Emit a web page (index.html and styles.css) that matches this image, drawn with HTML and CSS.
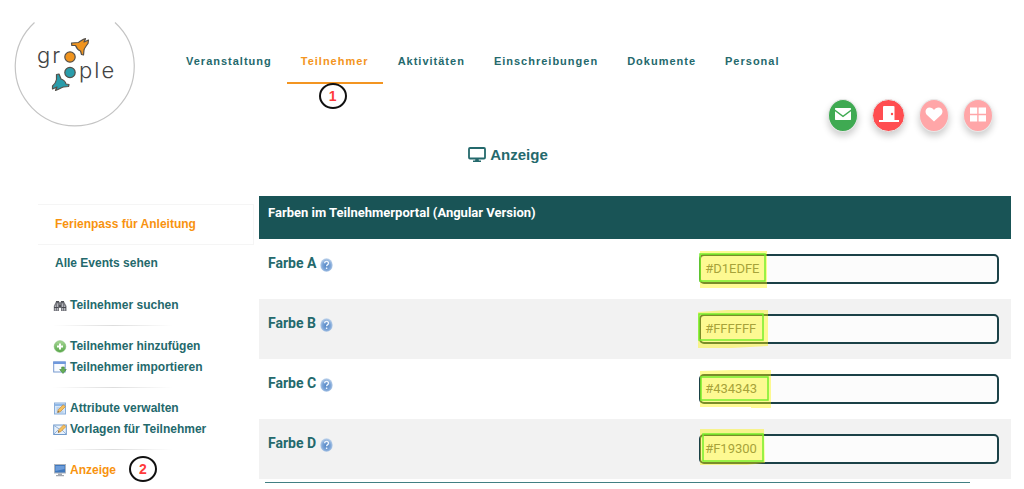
FILE: index.html
```html
<!DOCTYPE html>
<html lang="de">
<head>
<meta charset="utf-8">
<title>Anzeige</title>
<link rel="stylesheet" href="styles.css">
</head>
<body>
<svg class="defs" width="0" height="0" aria-hidden="true">
  <defs>
    <radialGradient id="helpFill" cx="50%" cy="55%" r="55%"><stop offset="0" stop-color="#4f83c4"/><stop offset=".6" stop-color="#7ea6d8"/><stop offset="1" stop-color="#c3d6ec"/></radialGradient>
    <linearGradient id="addFill" x2="0" y2="1"><stop offset="0" stop-color="#a8d796"/><stop offset="1" stop-color="#57a649"/></linearGradient>
    <symbol id="help" viewBox="0 0 13 14"><ellipse cx="6.5" cy="7" rx="6.2" ry="6.7" fill="url(#helpFill)"/><path d="M4.7 5.2c0-2.5 3.8-2.4 3.8 0 0 1.500-1.900 1.400-1.900 3.100M6.600 9.600v1.300" fill="none" stroke="#edf4fc" stroke-width="1.400"/></symbol>
    <symbol id="pencil" viewBox="0 0 9 9"><path d="M.6 8.400 1.300 5.700 6.300.7 8.300 2.700 3.300 7.700Z" fill="#f5c05e" stroke="#c98d39" stroke-width=".7"/><path d="M.6 8.400 1 7 2 8Z" fill="#444"/></symbol>
  </defs>
</svg>
<header class="top">
  <a class="logo" href="#" aria-label="groople">
    <svg width="122" height="105" viewBox="0 0 122 105">
      <path d="M20.500.5A59.500 59.500 0 1 0 101 .5" fill="none" stroke="#c4c4c4" stroke-width="1.200"/>
      <g class="logo-text"><text x="23" y="41">gr</text><text x="65" y="56">ple</text></g>
      <g stroke="#55504a" stroke-width="1.200" stroke-linejoin="round">
        <circle cx="56" cy="35" r="5.200" fill="#f0941f"/>
        <circle cx="56" cy="50.500" r="5.200" fill="#2a9caa"/>
        <path d="M57.500 21 64.500 20.500C67 19 69 17 71.500 16.700L70 20 74.500 18 74 21.500C72 24 70.500 26 70 28L69.500 33 67.500 32.500 66.500 29C64 28 62.500 26 61.500 23.500L57.800 23.500Z" fill="#f0941f"/>
        <path d="M42.500 52.500 45 52 47 57C50 58 51.500 59.500 52 62L55 62.500 54.500 64.500 49.500 65C47 65.500 44.500 68 41.500 68.500L43 65 38.500 67 38.500 64C41 62 42 60 42.500 57.500Z" fill="#2a9caa"/>
      </g>
    </svg>
  </a>
  <nav class="nav">
    <a href="#">Veranstaltung</a>
    <a class="active" href="#">Teilnehmer<span class="step step-one">1</span></a>
    <a href="#">Aktivitäten</a>
    <a href="#">Einschreibungen</a>
    <a href="#">Dokumente</a>
    <a href="#">Personal</a>
  </nav>
  <div class="actions">
    <button class="round green" aria-label="Nachrichten"><svg width="18" height="14" viewBox="0 0 18 14"><path d="M1.500 1h15l.5.5v1L9 8.500 1 2.500v-1ZM1 4.300 9 10.200l8-5.900v8.200l-.5.500h-15l-.5-.5Z" fill="#fff"/></svg></button>
    <button class="round red" aria-label="Abmelden"><svg width="20" height="18" viewBox="0 0 20 18"><path d="M4 1.500 5 1h9.500l1 .5V15H20v2H0v-2h4Z" fill="#fff"/><circle cx="13" cy="9" r="1.200" fill="#ff4d50"/></svg></button>
    <button class="round pink" aria-label="Favoriten"><svg width="18" height="15" viewBox="0 0 18 15"><path d="M9 14.500 2 8C-1 4.500 1 .5 4.500.5 6.500.5 8 1.500 9 3 10 1.500 11.500.5 13.500.5 17 .5 19 4.500 16 8Z" fill="#fff"/></svg></button>
    <button class="round pink" aria-label="Übersicht"><svg width="18" height="15" viewBox="0 0 18 15"><path d="M1 .5h7.200v6.300H1ZM9.600.5H17v6.300H9.600ZM1 8.200h7.200v6.300H1ZM9.600 8.200H17v6.300H9.600Z" fill="#fff"/></svg></button>
  </div>
</header>
<h1 class="title"><svg width="18" height="16" viewBox="0 0 18 16"><rect x="1" y="1" width="16" height="10.500" rx="1" fill="none" stroke="#24696c" stroke-width="1.800"/><path d="M7.500 11.500h3l.5 2.500h-4ZM5 13.500h8v1.500H5Z" fill="#24696c"/></svg>Anzeige</h1>
<div class="layout">
  <aside class="side">
    <a class="event" href="#">Ferienpass für Anleitung</a>
    <a class="all" href="#">Alle Events sehen</a>
    <ul class="menu">
      <li><a href="#"><svg width="14" height="14" viewBox="0 0 14 14"><path d="M3 3.500h3l1 1 1-1h3l2.500 4.500v5H8V10H6v3H.8V8Z" fill="#77787e"/><path d="M3 3h3v1.500H3ZM8 3h3v1.500H8ZM6 7h2v2H6Z" fill="#4f5056"/><path d="M2.500 7.500v5M4.500 5.500v7M9.500 5.500v7M11.500 7.500v5" stroke="#b4b5bc"/><path d="M1 9.500h4.500M8.500 9.500h4.500" stroke="#47484e"/></svg>Teilnehmer suchen</a></li>
      <li class="rule"></li>
      <li><a href="#"><svg width="14" height="14" viewBox="0 0 14 14"><circle cx="7" cy="7.500" r="5.800" fill="url(#addFill)" stroke="#76b768" stroke-width=".6"/><path d="M7 4.500v6M4 7.500h6" stroke="#fff" stroke-width="2"/></svg>Teilnehmer hinzufügen</a></li>
      <li><a href="#"><svg width="14" height="14" viewBox="0 0 14 14"><rect x=".7" y="2" width="11.500" height="10" fill="#f8fbff" stroke="#7799cf"/><path d="M.2 1.500h12.500V4H.2Z" fill="#6f98dc"/><path d="M8.700 7h2.600v2.500h2L10 13.500 6.700 9.500h2Z" fill="#64ad56" stroke="#43843b" stroke-width=".6"/></svg>Teilnehmer importieren</a></li>
      <li class="rule"></li>
      <li><a href="#"><svg width="14" height="14" viewBox="0 0 14 14"><rect x="1.500" y="2" width="11" height="11" fill="#d6e7fa" stroke="#88add9"/><path d="M2 3h10v2H2Z" fill="#8fb8e8"/><path d="M3.500 7h6M3.500 9h5M3.500 11h7" stroke="#a0bedf"/><use href="#pencil" x="4" y="3" width="9" height="9"/></svg>Attribute verwalten</a></li>
      <li><a href="#"><svg width="14" height="14" viewBox="0 0 14 14"><rect x=".7" y="3" width="12.600" height="9.500" fill="#e7f1fc" stroke="#719aca"/><path d="M1 12 5 8M13 12 9 8M1 3.500l6 4" stroke="#93b2da"/><use href="#pencil" x="4.500" y="2" width="9" height="9"/></svg>Vorlagen für Teilnehmer</a></li>
      <li class="rule"></li>
      <li><a class="current" href="#"><svg width="14" height="14" viewBox="0 0 14 14"><rect x="1.500" y="1.500" width="11" height="8.500" fill="#3f78bd" stroke="#aeb4bd"/><path d="M2.500 3h9v3l-9 2Z" fill="#6c9cda"/><path d="M5 10.500h4V12h2v1.300H3V12h2Z" fill="#a3a8b0"/></svg>Anzeige<span class="step step-two">2</span></a></li>
    </ul>
  </aside>
  <main class="content">
    <table class="colors">
      <thead><tr><th colspan="2">Farben im Teilnehmerportal (Angular Version)</th></tr></thead>
      <tbody>
        <tr><td><label for="ca">Farbe A</label><svg class="help" width="13" height="14"><use href="#help"/></svg></td><td><div class="field"><input id="ca" type="text" value="#D1EDFE"><svg class="mark" width="80" height="44" viewBox="0 0 80 44"><path d="M3 3H70V40H3Z"/><rect x="3" y="6" width="65" height="27"/></svg></div></td></tr>
        <tr><td><label for="cb">Farbe B</label><svg class="help" width="13" height="14"><use href="#help"/></svg></td><td><div class="field"><input id="cb" type="text" value="#FFFFFF"><svg class="mark" width="80" height="44" viewBox="0 0 80 44"><path d="M1 4 30 2H71V38L35 40H1Z"/><rect x="2" y="6" width="64" height="26"/></svg></div></td></tr>
        <tr><td><label for="cc">Farbe C</label><svg class="help" width="13" height="14"><use href="#help"/></svg></td><td><div class="field"><input id="cc" type="text" value="#434343"><svg class="mark" width="80" height="44" viewBox="0 0 80 44"><path d="M3 3 35 2H74V40H54V39H3Z"/><rect x="4" y="9" width="67" height="23"/></svg></div></td></tr>
        <tr><td><label for="cd">Farbe D</label><svg class="help" width="13" height="14"><use href="#help"/></svg></td><td><div class="field"><input id="cd" type="text" value="#F19300"><svg class="mark" width="80" height="44" viewBox="0 0 80 44"><path d="M3 1H67L68 35 50 37H3Z"/><rect x="6" y="6" width="60" height="27"/></svg></div></td></tr>
      </tbody>
    </table>
    <hr class="end">
  </main>
</div>
</body>
</html>
```
FILE: styles.css
```css
* { box-sizing: border-box; }
body { margin: 0; background: #fff; color: #24696c; font-family: "Liberation Sans", Arial, sans-serif; font-size: 12px; font-weight: bold; }
a { color: inherit; text-decoration: none; }
.defs { position: absolute; }
.top { display: flex; align-items: flex-start; padding: 22px 31px 0 14px; }
.logo { display: block; width: 122px; height: 105px; }
.logo svg { display: block; }
.logo-text { font-family: Inter, sans-serif; font-size: 22px; font-weight: 300; fill: #444; letter-spacing: 2px; }
.nav { display: flex; gap: 1px; margin-left: 36px; padding-top: 22px; }
.nav a { position: relative; height: 40px; padding: 10px 14px 0; font-size: 11px; line-height: 15px; letter-spacing: 1px; }
.nav .active { color: #f39521; border-bottom: 2px solid #f39521; }
.step { position: absolute; display: grid; place-items: center; width: 28px; height: 26px; border: 2px solid #111; border-radius: 50%; color: #ff3b3b; font-size: 14px; letter-spacing: 0; }
.step-one { top: 39px; left: 32px; }
.step-two { top: -3px; left: 76px; }
.actions { display: flex; gap: 14px; margin-left: auto; padding-top: 77px; }
.round { display: grid; place-items: center; width: 30px; height: 33px; padding: 0 0 3px; border: 1px solid #e8e8e8; border-radius: 50%; box-shadow: 0 4px 7px #0003; }
.green { background: #3faa52; }
.red { width: 33px; background: #ff4d50; }
.pink { background: #ffa6a8; }
.title { display: flex; align-items: center; justify-content: center; gap: 4px; margin: 14px 8px 0 0; font-size: 15px; line-height: 18px; }
.layout { display: flex; margin: 32px 13px 0 38px; }
.side { flex: 0 0 221px; padding-top: 8px; }
.side a { display: block; line-height: 20px; }
.side .event { margin-right: 5px; padding: 9px 17px 10px; color: #f8930f; border: 1px solid #f5f5f5; border-left: 0; }
.side .all { padding: 8px 17px; }
.menu { margin: 13px 0 0; padding: 0 0 0 15px; list-style: none; }
.menu a { position: relative; display: flex; align-items: center; gap: 3px; height: 21px; }
.menu svg { flex: none; }
.side .current { color: #f8930f; }
.menu .rule { width: 120px; height: 1px; margin: 10px 0 9px; background: linear-gradient(90deg, #fff, #ddd, #fff); }
.content { flex: 1; min-width: 0; }
.colors { width: 100%; border-collapse: collapse; font: bold 13px Roboto, Arial, sans-serif; text-align: left; }
.colors th { height: 43px; padding: 9px; color: #fff; background: #195456; vertical-align: top; line-height: 16px; }
.colors td { height: 60px; padding: 15px 13px 14px 9px; vertical-align: top; line-height: 18px; }
.colors td:first-child { width: 58%; font-size: 14px; }
.colors td:last-child { padding-left: 4px; padding-right: 12px; }
.colors tbody tr:nth-child(even) { background: #f2f2f2; }
.help { margin-left: 4px; vertical-align: -4px; }
.field { position: relative; }
.field input { display: block; width: 100%; height: 30px; padding: 0 4px 2px; border: 2px solid #1b4147; border-radius: 5px; background: #fcfcfc; color: #666; font: 13px Roboto, Arial, sans-serif; }
.mark { position: absolute; top: -6px; left: -2px; pointer-events: none; }
.mark path { fill: #fff500; fill-opacity: .42; }
.mark rect { fill: none; stroke: #76ee2c; stroke-width: 1.500; }
.end { height: 1px; margin: 3px 41px 0 6px; border: 0; background: #417f83; }
```
